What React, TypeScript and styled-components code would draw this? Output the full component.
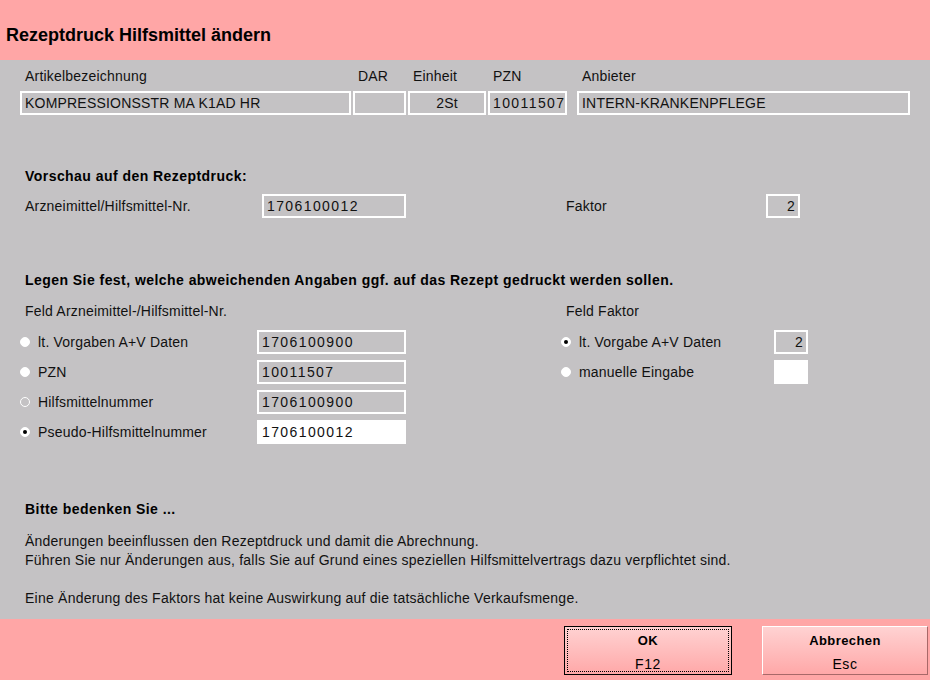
import React from 'react';
import styled, { createGlobalStyle } from 'styled-components';

const GlobalStyle = createGlobalStyle`
  html, body {
    margin: 0;
    padding: 0;
    background: #c4c2c4;
  }
  body {
    font-family: 'Liberation Sans', Arial, sans-serif;
    font-size: 14px;
    color: #111;
  }
`;

const colors = {
  pink: '#ffa6a6',
  gray: '#c4c2c4',
  white: '#ffffff',
};

const Window = styled.div`
  width: 930px;
  height: 680px;
  display: flex;
  flex-direction: column;
  overflow: hidden;
`;

const Header = styled.header`
  height: 60px;
  box-sizing: border-box;
  background: ${colors.pink};
  padding: 25px 0 0 6px;
`;

const Title = styled.h1`
  margin: 0;
  font-size: 18px;
  line-height: 20px;
  font-weight: bold;
  color: #000;
`;

const Body = styled.main`
  flex: 1;
  background: ${colors.gray};
  padding: 8px 20px 0;
  display: flex;
  flex-direction: column;
`;

const ArticleGrid = styled.div`
  display: grid;
  grid-template-columns: 331px 53px 78px 79px 1fr;
  column-gap: 2px;
  row-gap: 7px;
  & > :nth-child(5),
  & > :nth-child(10) {
    margin-left: 8px;
  }
`;

const ColLabel = styled.div`
  padding-left: 5px;
  line-height: 16px;
  letter-spacing: 0.2px;
`;

const Field = styled.div<{ $align?: 'left' | 'center' | 'right'; $num?: boolean; $active?: boolean }>`
  height: 24px;
  box-sizing: border-box;
  border: 2px solid ${colors.white};
  background: ${(p) => (p.$active ? colors.white : 'transparent')};
  padding: 0 3px;
  display: flex;
  align-items: center;
  justify-content: ${(p) => (p.$align === 'right' ? 'flex-end' : p.$align === 'center' ? 'center' : 'flex-start')};
  letter-spacing: ${(p) => (p.$num ? '1.4px' : '0.2px')};
  white-space: nowrap;
  overflow: hidden;
`;

const Heading = styled.h2<{ $top: number }>`
  margin: ${(p) => p.$top}px 0 0 5px;
  font-size: 14px;
  line-height: 16px;
  font-weight: bold;
  letter-spacing: 0.45px;
  color: #000;
`;

const Columns = styled.div<{ $top: number }>`
  margin-top: ${(p) => p.$top}px;
  display: grid;
  grid-template-columns: 386px 155px 1fr;
`;

const Panel = styled.div`
  display: flex;
  flex-direction: column;
  gap: 6px;
`;

const PanelRight = styled(Panel)`
  grid-column: 3;
`;

const Row = styled.div<{ $label: number; $field: number }>`
  display: grid;
  grid-template-columns: ${(p) => p.$label}px ${(p) => p.$field}px;
  align-items: center;
`;

const RowLabel = styled.div`
  padding-left: 5px;
  letter-spacing: 0.2px;
`;

const SubLabel = styled.div`
  padding-left: 5px;
  line-height: 16px;
  margin-bottom: 5px;
  letter-spacing: 0.2px;
`;

const RadioLabel = styled.label`
  display: flex;
  align-items: center;
  gap: 8px;
  letter-spacing: 0.2px;
`;

const RadioDot = styled.span<{ $checked?: boolean; $hollow?: boolean }>`
  position: relative;
  width: 10px;
  height: 10px;
  border-radius: 50%;
  box-sizing: border-box;
  background: ${(p) => (p.$hollow ? 'transparent' : colors.white)};
  border: 1px solid ${colors.white};
  &::after {
    content: '';
    display: ${(p) => (p.$checked ? 'block' : 'none')};
    position: absolute;
    left: 2px;
    top: 2px;
    width: 4px;
    height: 4px;
    border-radius: 50%;
    background: #000;
  }
`;

const Notes = styled.div`
  margin: 15px 0 0 5px;
  line-height: 19px;
  letter-spacing: 0.23px;
`;

const Footer = styled.footer`
  height: 61px;
  box-sizing: border-box;
  background: ${colors.pink};
  padding: 7px 2px 0 0;
  display: flex;
  justify-content: flex-end;
  align-items: flex-start;
  gap: 30px;
`;

const Button = styled.button<{ $focused?: boolean; $w: number }>`
  position: relative;
  width: ${(p) => p.$w}px;
  height: 49px;
  box-sizing: border-box;
  padding: 6px 0 0;
  font-family: inherit;
  background: linear-gradient(#ffd2d2, #ffa8a8);
  border: 1px solid;
  border-color: ${(p) => (p.$focused ? '#000 #000 #000 #000' : '#fff #a86868 #a86868 #fff')};
  display: flex;
  flex-direction: column;
  align-items: center;
  color: #000;
  cursor: pointer;
  &::after {
    content: '';
    display: ${(p) => (p.$focused ? 'block' : 'none')};
    position: absolute;
    inset: 2px;
    border: 1px dotted #000;
  }
`;

const ButtonTitle = styled.span`
  font-weight: bold;
  font-size: 13px;
  line-height: 16px;
  letter-spacing: 0.4px;
`;

const ButtonKey = styled.span`
  margin-top: 7px;
  font-size: 14px;
  line-height: 16px;
  letter-spacing: 0.6px;
`;

export default function App() {
  return (
    <Window>
      <GlobalStyle />
      <Header>
        <Title>Rezeptdruck Hilfsmittel ändern</Title>
      </Header>
      <Body>
        <ArticleGrid>
          <ColLabel>Artikelbezeichnung</ColLabel>
          <ColLabel>DAR</ColLabel>
          <ColLabel>Einheit</ColLabel>
          <ColLabel>PZN</ColLabel>
          <ColLabel>Anbieter</ColLabel>
          <Field>KOMPRESSIONSSTR MA K1AD HR</Field>
          <Field />
          <Field $align="center">2St</Field>
          <Field $num>10011507</Field>
          <Field>INTERN-KRANKENPFLEGE</Field>
        </ArticleGrid>

        <Heading $top={53}>Vorschau auf den Rezeptdruck:</Heading>
        <Columns $top={10}>
          <Row $label={242} $field={144}>
            <RowLabel>Arzneimittel/Hilfsmittel-Nr.</RowLabel>
            <Field $num>1706100012</Field>
          </Row>
          <PanelRight>
            <Row $label={205} $field={34}>
              <RowLabel>Faktor</RowLabel>
              <Field $align="right">2</Field>
            </Row>
          </PanelRight>
        </Columns>

        <Heading $top={54}>
          Legen Sie fest, welche abweichenden Angaben ggf. auf das Rezept gedruckt werden sollen.
        </Heading>
        <Columns $top={15}>
          <Panel>
            <SubLabel>Feld Arzneimittel-/Hilfsmittel-Nr.</SubLabel>
            <Row $label={237} $field={149}>
              <RadioLabel>
                <RadioDot />
                lt. Vorgaben A+V Daten
              </RadioLabel>
              <Field $num>1706100900</Field>
            </Row>
            <Row $label={237} $field={149}>
              <RadioLabel>
                <RadioDot />
                PZN
              </RadioLabel>
              <Field $num>10011507</Field>
            </Row>
            <Row $label={237} $field={149}>
              <RadioLabel>
                <RadioDot $hollow />
                Hilfsmittelnummer
              </RadioLabel>
              <Field $num>1706100900</Field>
            </Row>
            <Row $label={237} $field={149}>
              <RadioLabel>
                <RadioDot $checked />
                Pseudo-Hilfsmittelnummer
              </RadioLabel>
              <Field $num $active>
                1706100012
              </Field>
            </Row>
          </Panel>
          <PanelRight>
            <SubLabel>Feld Faktor</SubLabel>
            <Row $label={213} $field={34}>
              <RadioLabel>
                <RadioDot $checked />
                lt. Vorgabe A+V Daten
              </RadioLabel>
              <Field $align="right">2</Field>
            </Row>
            <Row $label={213} $field={34}>
              <RadioLabel>
                <RadioDot />
                manuelle Eingabe
              </RadioLabel>
              <Field $active />
            </Row>
          </PanelRight>
        </Columns>

        <Heading $top={57}>Bitte bedenken Sie ...</Heading>
        <Notes>
          Änderungen beeinflussen den Rezeptdruck und damit die Abrechnung.
          <br />
          Führen Sie nur Änderungen aus, falls Sie auf Grund eines speziellen Hilfsmittelvertrags dazu
          verpflichtet sind.
          <br />
          <br />
          Eine Änderung des Faktors hat keine Auswirkung auf die tatsächliche Verkaufsmenge.
        </Notes>
      </Body>
      <Footer>
        <Button $focused $w={168}>
          <ButtonTitle>OK</ButtonTitle>
          <ButtonKey>F12</ButtonKey>
        </Button>
        <Button $w={166}>
          <ButtonTitle>Abbrechen</ButtonTitle>
          <ButtonKey>Esc</ButtonKey>
        </Button>
      </Footer>
    </Window>
  );
}
